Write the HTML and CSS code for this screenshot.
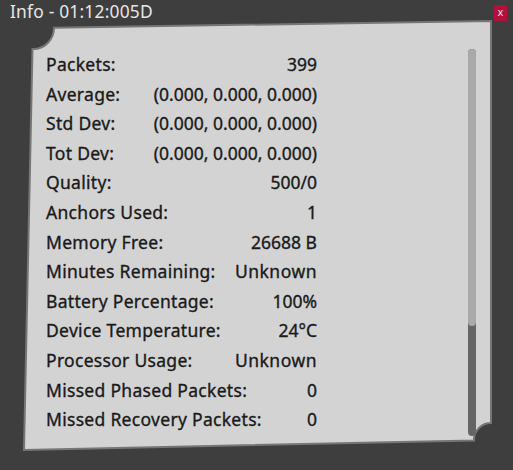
FILE: index.html
```html
<!DOCTYPE html>
<html>
<head>
<meta charset="utf-8">
<link rel="stylesheet" href="styles.css">
</head>
<body>
<div class="window">
  <div class="titlebar">
    <span class="title">Info - 01:12:005D</span>
    <span class="close">x</span>
  </div>
  <div class="panel">
    <svg class="panel-shape" width="467" height="429" viewBox="0 0 467 429">
      <path d="M 0 429 L 8.5 28 A 21 21 0 0 0 30 6.7 L 467 0 L 467 402 A 17 17 0 0 0 450 419.4 Z" fill="#d3d3d3" stroke="#767676" stroke-width="2"/>
    </svg>
    <div class="content">
      <div class="list">
        <div class="row"><span class="label">Packets:</span><span>399</span></div>
        <div class="row"><span class="label">Average:</span><span>(0.000, 0.000, 0.000)</span></div>
        <div class="row"><span class="label">Std Dev:</span><span>(0.000, 0.000, 0.000)</span></div>
        <div class="row"><span class="label">Tot Dev:</span><span>(0.000, 0.000, 0.000)</span></div>
        <div class="row"><span class="label">Quality:</span><span>500/0</span></div>
        <div class="row"><span class="label">Anchors Used:</span><span>1</span></div>
        <div class="row"><span class="label">Memory Free:</span><span>26688 B</span></div>
        <div class="row"><span class="label">Minutes Remaining:</span><span class="word">Unknown</span></div>
        <div class="row"><span class="label">Battery Percentage:</span><span>100%</span></div>
        <div class="row"><span class="label">Device Temperature:</span><span>24°C</span></div>
        <div class="row"><span class="label">Processor Usage:</span><span class="word">Unknown</span></div>
        <div class="row"><span class="label">Missed Phased Packets:</span><span>0</span></div>
        <div class="row"><span class="label">Missed Recovery Packets:</span><span>0</span></div>
      </div>
      <div class="scrollbar"><div class="thumb"></div></div>
    </div>
  </div>
</div>
</body>
</html>
```
FILE: styles.css
```css
html, body {
  margin: 0;
  padding: 0;
}
body {
  width: 513px;
  height: 470px;
  background: #3e3e3e;
  overflow: hidden;
  font-family: "Noto Sans", "Open Sans", sans-serif;
}
.window {
  width: 513px;
  height: 470px;
  display: flex;
  flex-direction: column;
}
.titlebar {
  height: 21px;
  display: flex;
  justify-content: space-between;
  align-items: flex-start;
  padding-left: 10px;
  padding-right: 6px;
}
.title {
  color: #e6e6e6;
  font-size: 17.4px;
  letter-spacing: 0.2px;
  line-height: 19px;
  margin-top: 2px;
  white-space: nowrap;
}
.close {
  margin-top: 5px;
  width: 13px;
  height: 16px;
  background: #b2103b;
  color: #f0e0e4;
  font-size: 10px;
  line-height: 15px;
  text-align: center;
  font-family: "DejaVu Sans", sans-serif;
}
.panel {
  position: relative;
  margin-left: 24px;
  width: 467px;
  height: 429px;
}
.panel-shape {
  position: absolute;
  left: 0;
  top: 0;
  overflow: visible;
}
.content {
  position: relative;
  display: flex;
  padding-left: 22px;
  padding-top: 29px;
}
.list {
  width: 271px;
  display: flex;
  flex-direction: column;
}
.row {
  display: flex;
  justify-content: space-between;
  height: 29.6px;
  line-height: 29.6px;
  font-size: 17.5px;
  color: #1a1a1a;
  -webkit-text-stroke: 0.35px #1a1a1a;
  white-space: nowrap;
}
.label {
  letter-spacing: 0.3px;
}
.word {
  letter-spacing: 0.5px;
}
.scrollbar {
  margin-left: 151px;
  margin-top: -1px;
  width: 8px;
  height: 387px;
  border-radius: 4px;
  background: #656565;
  display: flex;
  flex-direction: column;
}
.thumb {
  height: 277px;
  border-radius: 4px;
  background: #a9a9a9;
}
```
